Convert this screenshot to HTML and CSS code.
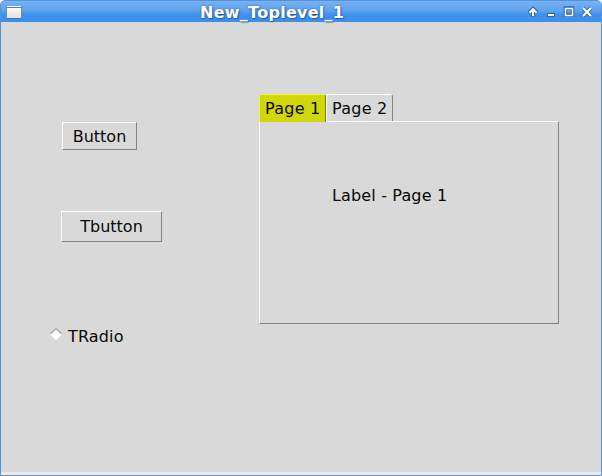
FILE: index.html
```html
<!DOCTYPE html>
<html lang="en">
<head>
<meta charset="utf-8">
<title>New_Toplevel_1</title>
<link rel="stylesheet" href="styles.css">
</head>
<body>
<div class="window">
  <header class="titlebar">
    <svg class="app-icon" width="16" height="14" viewBox="0 0 16 14" shape-rendering="crispEdges">
      <defs><linearGradient id="paper" x1="0" y1="0" x2="0" y2="1"><stop offset="0" stop-color="#fff"/><stop offset="1" stop-color="#e2e3dc"/></linearGradient></defs>
      <path d="M1 12h14v1H1z" fill="#3f73ad"/>
      <path d="M0 0h16v12H0z" fill="#77899b"/>
      <path d="M1 0h14v12H1z" fill="url(#paper)"/>
      <path d="M1 1h14v1H1z" fill="#4d7fba"/>
    </svg>
    <h1 class="title">New_Toplevel_1</h1>
    <svg class="controls" width="68" height="14" viewBox="0 0 68 14">
      <g fill="none" stroke="#2e68ae" stroke-width="4">
        <path d="M6 11.5V4M2 8L6 4 10 8"/>
        <path d="M20 10h8" stroke-width="4"/>
        <path d="M38.5 3h7v7h-7z" stroke-width="3.6"/>
        <path d="M56 3l8 8M64 3l-8 8"/>
      </g>
      <g fill="none" stroke="#fff" stroke-width="2">
        <path d="M6 11V4M2.5 7.7L6 4.2 9.5 7.7"/>
        <path d="M21 10h6"/>
        <path d="M38.5 3.5h7v7h-7z" stroke-width="1.5"/>
        <path d="M56 3l8 8M64 3l-8 8" stroke-width="2.3"/>
      </g>
    </svg>
  </header>
  <main class="content">
    <section class="widgets">
      <button class="button">Button</button>
      <button class="button tbutton">Tbutton</button>
      <label class="radio">
        <svg width="12" height="13" viewBox="0 0 12 13">
          <path d="M6 .5L11.8 6.5 6 12.3.2 6.5z" fill="#fff"/>
          <path d="M.5 6L6 .5 11.5 6" fill="none" stroke="#777" stroke-width="1"/>
        </svg>
        <span>TRadio</span>
      </label>
    </section>
    <section class="notebook">
      <nav class="tabs">
        <div class="tab active">Page 1</div>
        <div class="tab">Page 2</div>
      </nav>
      <div class="page">Label - Page 1</div>
    </section>
  </main>
  <footer class="grip"></footer>
</div>
</body>
</html>
```
FILE: styles.css
```css
* { box-sizing: border-box; }

body {
  margin: 0;
  background: #fff;
  color: #080808;
  font: 16px/18px "DejaVu Sans", sans-serif;
  letter-spacing: .15px;
}

.window {
  display: flex;
  flex-direction: column;
  height: 476px;
  overflow: hidden;
  border: 1px solid #5294dc;
  border-radius: 5px 5px 0 0;
  background: #d9d9d9;
}

.titlebar {
  display: flex;
  align-items: center;
  height: 21px;
  padding: 0 6px 0 5px;
  background: linear-gradient(#79b1f3, #5fa2ef 45%, #3d91ec 65%, #3d90ea);
}

.app-icon { margin-top: 2px; }

.title {
  margin: 2px auto 0 178px;
  color: #fff;
  font-size: 16px;
  line-height: 18px;
  letter-spacing: .27px;
  text-shadow: 1px 1px 1px #2b5f9f, 0 0 2px #2b65ad;
}

.controls { margin-top: 1px; }

.content {
  display: flex;
  align-items: flex-start;
  height: 450px;
}

.widgets {
  display: flex;
  flex-direction: column;
  align-items: flex-start;
  width: 209px;
  margin-left: 49px;
  padding-top: 100px;
}

.button {
  width: 75px;
  height: 28px;
  margin-left: 12px;
  padding: 2px 0 0;
  border: 1px solid;
  border-color: #fff #828282 #828282 #fff;
  background: #d9d9d9;
  color: inherit;
  font: inherit;
}

.tbutton {
  width: 101px;
  height: 31px;
  margin: 61px 0 0 11px;
  padding: 0;
}

.radio {
  display: flex;
  gap: 6px;
  margin-top: 86px;
}

.notebook {
  width: 300px;
  padding-top: 72px;
}

.tabs {
  display: flex;
  height: 27px;
}

.tab {
  width: 67px;
  height: 27px;
  padding: 5px 0 0 5px;
  border: 1px solid;
  border-color: #fff #828282 #d9d9d9 #fff;
  border-bottom: 0;
  border-radius: 2px 3px 0 0;
  letter-spacing: .25px;
  white-space: nowrap;
}

.tab.active {
  position: relative;
  height: 28px;
  border-color: #f0f44a #77790a #d2d70c #f0f44a;
  background: #d2d70c;
}

.page {
  height: 203px;
  padding: 65px 0 0 72px;
  border: 1px solid;
  border-color: #fff #828282 #828282 #fff;
}

.grip {
  height: 3px;
  background: #eeebe3;
}
```
